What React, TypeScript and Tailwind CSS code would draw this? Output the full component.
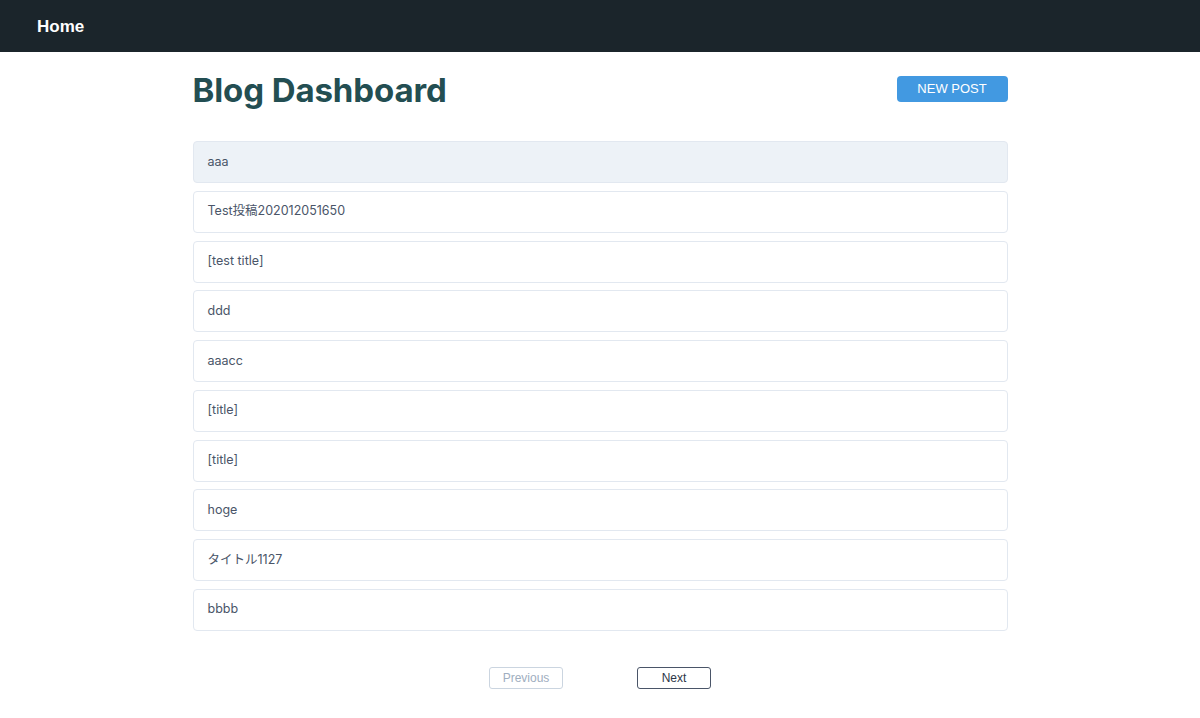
const posts = [
  'aaa',
  'Test投稿202012051650',
  '[test title]',
  'ddd',
  'aaacc',
  '[title]',
  '[title]',
  'hoge',
  'タイトル1127',
  'bbbb',
];

export default function App() {
  return (
    <div className="min-h-[718px] bg-white font-['Inter','Noto_Sans_CJK_JP',sans-serif]">
      <nav className="h-[52px] bg-[#1b252b] flex items-center px-[37px]">
        <span className="text-white text-[17px] font-bold font-['Liberation_Sans',sans-serif] mt-[1px]">Home</span>
      </nav>

      <main className="w-[815px] mx-auto">
        <div className="flex items-start justify-between pt-[16px]">
          <h1 className="text-[33px] leading-[44px] font-bold text-[#234e52] tracking-[-0.1px]">Blog Dashboard</h1>
          <button className="mt-[8px] w-[111px] h-[26px] rounded-[4px] bg-[#4299e1] text-white text-[13px] font-['Liberation_Sans',sans-serif]">
            NEW POST
          </button>
        </div>

        <ul className="mt-[29px] flex flex-col gap-[7.75px]">
          {posts.map((title, i) => (
            <li
              key={i}
              className={`h-[42px] flex items-center px-[14px] border border-[#e2e8f0] rounded-[4px] text-[12.5px] text-[#4a5568] ${
                i === 0 ? 'bg-[#edf2f7]' : 'bg-white'
              }`}
            >
              {title}
            </li>
          ))}
        </ul>
      </main>

      <div className="flex justify-center gap-[74px] mt-[36px] font-['Liberation_Sans',sans-serif]">
        <button className="w-[74px] h-[22px] rounded-[3px] border border-[#cbd5e0] text-[12px] text-[#a0aec0]">
          Previous
        </button>
        <button className="w-[74px] h-[22px] rounded-[3px] border border-[#4a5568] text-[12px] text-[#2d3748]">
          Next
        </button>
      </div>
    </div>
  );
}
